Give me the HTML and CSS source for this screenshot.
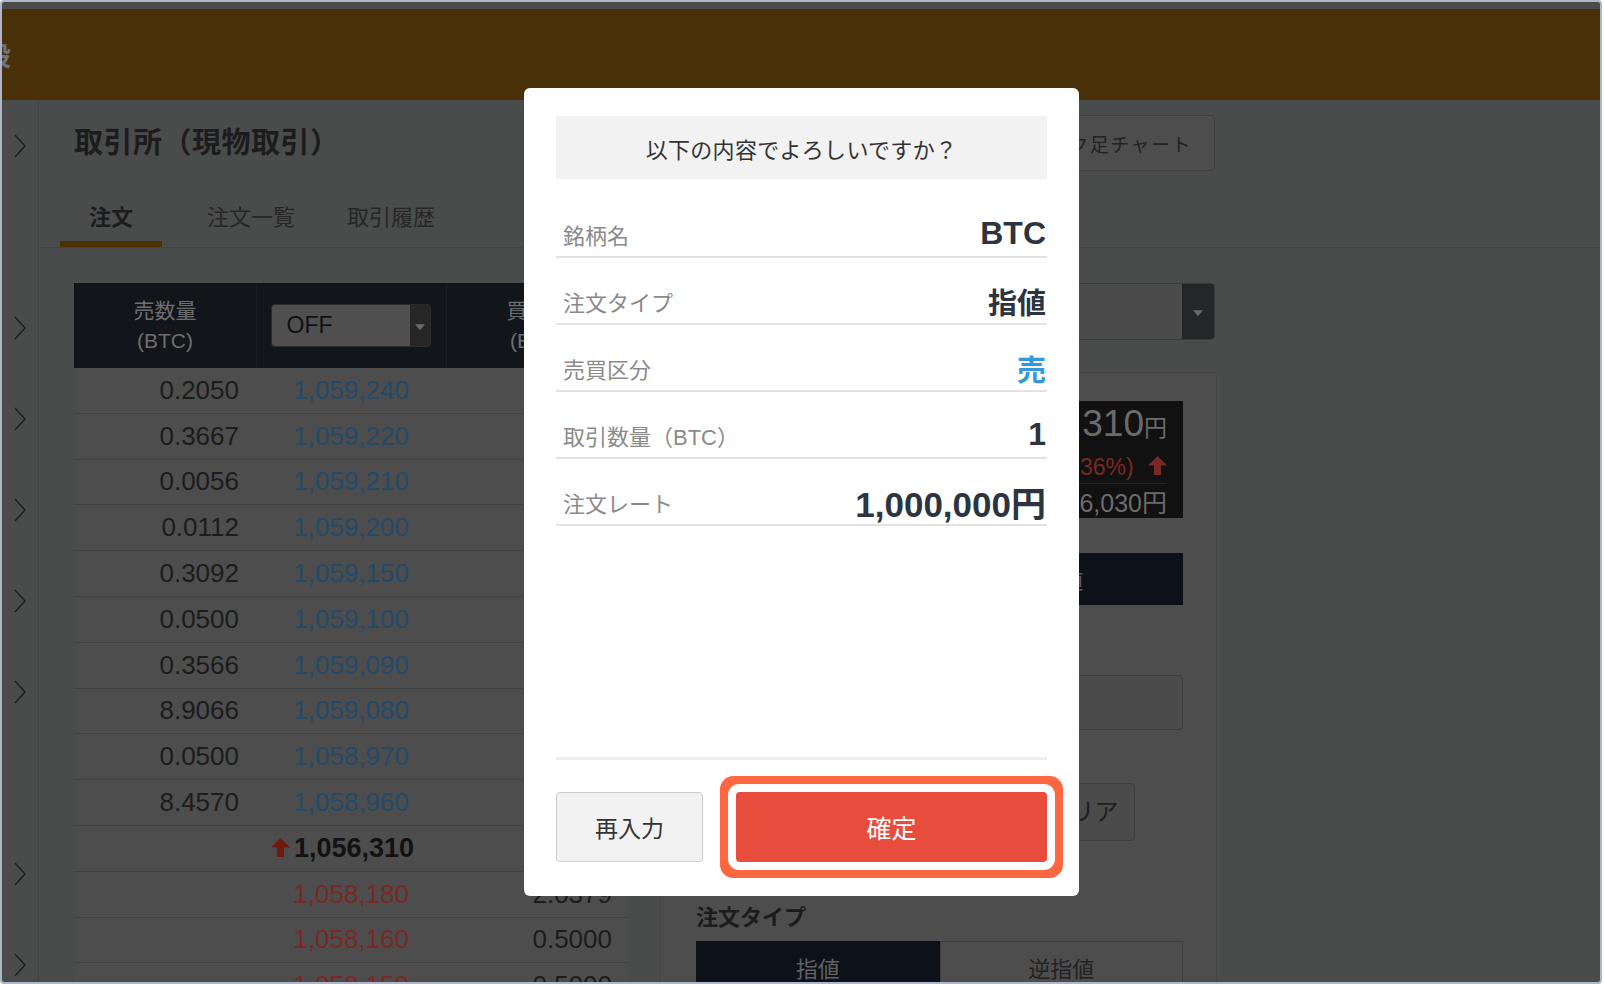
FILE: index.html
```html
<!DOCTYPE html>
<html lang="ja">
<head>
    <meta charset="UTF-8">
    <meta name="viewport" content="width=device-width, initial-scale=1.0">
    <title>取引所（現物取引）</title>
    <link rel="stylesheet" href="styles.css">
</head>
<body>
    <div class="window">
        <div class="top-strip"></div>
        <header class="site-header">
            <span class="header-cut">設</span>
        </header>

        <div class="layout">
            <nav class="sidebar">
                <div class="nav-item"><svg viewBox="0 0 12 24"><path d="M1 1 L11 12 L1 23"/></svg></div>
                <div class="nav-item"></div>
                <div class="nav-item"><svg viewBox="0 0 12 24"><path d="M1 1 L11 12 L1 23"/></svg></div>
                <div class="nav-item"><svg viewBox="0 0 12 24"><path d="M1 1 L11 12 L1 23"/></svg></div>
                <div class="nav-item"><svg viewBox="0 0 12 24"><path d="M1 1 L11 12 L1 23"/></svg></div>
                <div class="nav-item"><svg viewBox="0 0 12 24"><path d="M1 1 L11 12 L1 23"/></svg></div>
                <div class="nav-item"><svg viewBox="0 0 12 24"><path d="M1 1 L11 12 L1 23"/></svg></div>
                <div class="nav-item"></div>
                <div class="nav-item"><svg viewBox="0 0 12 24"><path d="M1 1 L11 12 L1 23"/></svg></div>
                <div class="nav-item"><svg viewBox="0 0 12 24"><path d="M1 1 L11 12 L1 23"/></svg></div>
            </nav>

            <main class="content">
                <div class="page-head">
                    <h1 class="page-title">取引所（現物取引）</h1>
                    <button class="chart-btn">ローソク足チャート</button>
                </div>

                <div class="tabs">
                    <div class="tab active">注文</div>
                    <div class="tab">注文一覧</div>
                    <div class="tab">取引履歴</div>
                </div>

                <div class="workspace">
                    <section class="board">
                        <div class="board-head">
                            <div class="head-col">売数量<br>(BTC)</div>
                            <div class="head-col">
                                <div class="off-select">OFF<span class="select-arrow"></span></div>
                            </div>
                            <div class="head-col">買数量<br>(BTC)</div>
                        </div>

                        <div class="board-row"><span class="qty">0.2050</span><span class="price ask">1,059,240</span><span class="qty"></span></div>
                        <div class="board-row"><span class="qty">0.3667</span><span class="price ask">1,059,220</span><span class="qty"></span></div>
                        <div class="board-row"><span class="qty">0.0056</span><span class="price ask">1,059,210</span><span class="qty"></span></div>
                        <div class="board-row"><span class="qty">0.0112</span><span class="price ask">1,059,200</span><span class="qty"></span></div>
                        <div class="board-row"><span class="qty">0.3092</span><span class="price ask">1,059,150</span><span class="qty"></span></div>
                        <div class="board-row"><span class="qty">0.0500</span><span class="price ask">1,059,100</span><span class="qty"></span></div>
                        <div class="board-row"><span class="qty">0.3566</span><span class="price ask">1,059,090</span><span class="qty"></span></div>
                        <div class="board-row"><span class="qty">8.9066</span><span class="price ask">1,059,080</span><span class="qty"></span></div>
                        <div class="board-row"><span class="qty">0.0500</span><span class="price ask">1,058,970</span><span class="qty"></span></div>
                        <div class="board-row"><span class="qty">8.4570</span><span class="price ask">1,058,960</span><span class="qty"></span></div>
                        <div class="board-row mid">
                            <span class="qty"></span>
                            <span class="price last"><svg class="up" viewBox="0 0 16 16"><path d="M8 0 L16 8 L11 8 L11 16 L5 16 L5 8 L0 8 Z"/></svg>1,056,310</span>
                            <span class="qty"></span>
                        </div>
                        <div class="board-row"><span class="qty"></span><span class="price bid">1,058,180</span><span class="qty">2.0379</span></div>
                        <div class="board-row"><span class="qty"></span><span class="price bid">1,058,160</span><span class="qty">0.5000</span></div>
                        <div class="board-row"><span class="qty"></span><span class="price bid">1,058,150</span><span class="qty">0.5000</span></div>
                    </section>

                    <section class="order">
                        <div class="pair-select"><span>BTC/JPY</span><span class="pair-arrow"></span></div>

                        <div class="order-card">
                            <div class="price-box">
                                <div class="price-now">1,056,310<small>円</small></div>
                                <div class="price-diff">+3,780 (0.36%) <svg class="up" viewBox="0 0 16 16"><path d="M8 0 L16 8 L11 8 L11 16 L5 16 L5 8 L0 8 Z"/></svg></div>
                                <div class="price-high">前日終値 1,046,030円</div>
                            </div>

                            <div class="side-toggle">
                                <div class="side">買</div>
                                <div class="side on">指値</div>
                            </div>

                            <div class="field-label">注文数量</div>
                            <div class="field-input"></div>

                            <div class="field-actions">
                                <button class="ghost-btn">全額</button>
                                <button class="ghost-btn">クリア</button>
                            </div>

                            <div class="section-label">注文タイプ</div>
                            <div class="type-toggle">
                                <div class="type on">指値</div>
                                <div class="type">逆指値</div>
                            </div>
                        </div>
                    </section>
                </div>
            </main>
        </div>

        <div class="modal">
            <div class="confirm-title">以下の内容でよろしいですか？</div>

            <div class="detail-list">
                <div class="detail-row">
                    <span class="detail-label">銘柄名</span>
                    <span class="detail-value">BTC</span>
                </div>
                <div class="detail-row">
                    <span class="detail-label">注文タイプ</span>
                    <span class="detail-value cjk">指値</span>
                </div>
                <div class="detail-row">
                    <span class="detail-label">売買区分</span>
                    <span class="detail-value cjk sell">売</span>
                </div>
                <div class="detail-row">
                    <span class="detail-label">取引数量（BTC）</span>
                    <span class="detail-value">1</span>
                </div>
                <div class="detail-row">
                    <span class="detail-label">注文レート</span>
                    <span class="detail-value rate">1,000,000円</span>
                </div>
            </div>

            <div class="modal-actions">
                <button class="btn-retry">再入力</button>
                <button class="btn-confirm">確定</button>
            </div>
        </div>
    </div>
</body>
</html>
```

FILE: styles.css
```css
* {
    box-sizing: border-box;
}

body {
    margin: 0;
    background-color: #fff;
    font-family: "Liberation Sans", "Noto Sans CJK JP", sans-serif;
}

button {
    font-family: inherit;
}

.window {
    position: relative;
    width: 1602px;
    height: 984px;
    border: 2px solid #aeb7c7;
    border-radius: 4px;
    background-color: #4a4b4b;
    overflow: hidden;
}

.top-strip {
    height: 7px;
}

.site-header {
    height: 91px;
    background-color: #4a3009;
    display: flex;
    align-items: center;
}

.header-cut {
    margin-left: -17px;
    font-size: 26px;
    font-weight: 700;
    color: #6b7486;
}

/* 左のメニュー */
.layout {
    display: flex;
    height: 882px;
}

.sidebar {
    width: 37px;
    flex-shrink: 0;
    border-right: 1px solid #414242;
}

.nav-item {
    height: 91px;
    display: flex;
    align-items: center;
    justify-content: center;
}

.nav-item svg {
    width: 12px;
    height: 24px;
    fill: none;
    stroke: #1d1d1d;
    stroke-width: 1.4;
}

.content {
    flex: 1;
    min-width: 0;
}

.page-head {
    display: flex;
    align-items: center;
    justify-content: space-between;
    height: 56px;
    margin-top: 15px;
    padding: 0 385px 0 35px;
}

.page-title {
    margin: 0;
    font-size: 29px;
    line-height: 40px;
    font-weight: 700;
    letter-spacing: 0.5px;
    color: #1c1c1c;
}

.chart-btn {
    height: 56px;
    padding: 0 22px;
    border: 1px solid #3e3e3e;
    border-radius: 4px;
    background-color: #4d4d4d;
    color: #222;
    font-size: 19px;
    letter-spacing: 1.5px;
}

.tabs {
    display: flex;
    height: 62px;
    margin-top: 15px;
    padding-left: 2px;
    border-bottom: 1px solid #424343;
}

.tab {
    position: relative;
    width: 140px;
    display: flex;
    align-items: center;
    justify-content: center;
    padding-bottom: 4px;
    font-size: 22px;
    color: #262626;
}

.tab.active {
    font-weight: 700;
    color: #1c1c1c;
}

.tab.active::after {
    content: "";
    position: absolute;
    left: 19px;
    right: 19px;
    bottom: 0;
    height: 6px;
    background-color: #4c3200;
}

.workspace {
    display: flex;
    gap: 31px;
    padding: 35px 0 0 35px;
}

/* 板 */
.board {
    width: 555px;
    flex-shrink: 0;
}

.board-head {
    display: grid;
    grid-template-columns: 183px 190px 182px;
    height: 85px;
    background-color: #12161b;
}

.head-col {
    display: flex;
    align-items: center;
    justify-content: center;
    text-align: center;
    font-size: 21px;
    line-height: 30px;
    color: #6e6e6e;
    border-right: 1px solid #1b1f25;
}

.head-col:last-child {
    border-right: none;
}

.off-select {
    position: relative;
    width: 160px;
    height: 43px;
    margin-left: -2px;
    padding-left: 15px;
    border: 1px solid #2c2c2c;
    border-radius: 4px;
    background-color: #4f4f4f;
    color: #111;
    font-size: 23px;
    line-height: 41px;
    text-align: left;
}

.select-arrow {
    position: absolute;
    top: 0;
    right: 0;
    bottom: 0;
    width: 20px;
    background-color: #262626;
    border-radius: 0 3px 3px 0;
}

.select-arrow::after,
.pair-arrow::after {
    content: "";
    position: absolute;
    top: 50%;
    left: 50%;
    transform: translate(-50%, -30%);
    border-left: 5px solid transparent;
    border-right: 5px solid transparent;
    border-top: 6px solid #6a6a6a;
}

.board-row {
    display: grid;
    grid-template-columns: 183px 190px 182px;
    height: 45.8px;
    background-color: #4d4d4d;
    border-bottom: 1px solid #414141;
    font-size: 26px;
    align-items: center;
}

.qty {
    text-align: right;
    padding-right: 18px;
    color: #1c1c1c;
}

.qty:last-child {
    padding-right: 17px;
}

.price {
    text-align: right;
    padding-right: 38px;
}

.price.ask {
    color: #234a6a;
}

.price.bid {
    color: #7a2823;
}

.price.last {
    padding-right: 33px;
    font-size: 27px;
    font-weight: 700;
    color: #121212;
}

.up {
    width: 19px;
    height: 19px;
    margin-right: 4px;
    fill: #6e1a13;
}

/* 注文フォーム */
.order {
    width: 557px;
    flex-shrink: 0;
}

.pair-select {
    position: relative;
    width: 555px;
    height: 57px;
    padding-left: 20px;
    border: 1px solid #3a3a3a;
    border-radius: 4px;
    background-color: #4b4b4b;
    font-size: 22px;
    line-height: 55px;
    color: #1c1c1c;
}

.pair-arrow {
    position: absolute;
    top: 0;
    right: 0;
    bottom: 0;
    width: 32px;
    background-color: #242628;
    border-radius: 0 3px 3px 0;
}

.order-card {
    height: 700px;
    margin-top: 32px;
    padding: 28px 33px 0 35px;
    border: 1px solid #454545;
    border-radius: 4px;
    background-color: #4d4d4d;
}

.price-box {
    height: 117px;
    padding: 0 16px 0 0;
    background-color: #111;
    text-align: right;
    color: #6b6b6b;
}

.price-now {
    font-size: 37px;
    line-height: 45px;
}

.price-now small {
    font-size: 23px;
}

.price-diff {
    font-size: 23px;
    line-height: 32px;
    color: #7a2823;
    border-bottom: 1px solid #262626;
}

.price-diff .up {
    fill: #7a2823;
    width: 19px;
    height: 19px;
    margin: 0 0 0 8px;
}

.price-high {
    font-size: 25px;
    line-height: 38px;
}

.side-toggle,
.type-toggle {
    display: flex;
}

.side-toggle {
    height: 52px;
    margin-top: 35px;
}

.side,
.type {
    flex: 1;
    display: flex;
    align-items: center;
    justify-content: center;
    font-size: 22px;
    color: #222;
    border: 1px solid #3e3e3e;
}

.side.on,
.type.on {
    background-color: #0d111a;
    border-color: #0d111a;
    color: #626262;
}

.field-label {
    margin-top: 20px;
    font-size: 20px;
    line-height: 30px;
    color: #1c1c1c;
}

.field-input {
    height: 55px;
    margin-top: 20px;
    border: 1px solid #3e3e3e;
    border-radius: 4px;
    background-color: #4b4b4b;
}

.field-actions {
    display: flex;
    justify-content: flex-end;
    gap: 12px;
    margin-top: 53px;
    padding-right: 48px;
}

.ghost-btn {
    width: 105px;
    height: 58px;
    padding-bottom: 6px;
    border: 1px solid #3e3e3e;
    border-radius: 4px;
    background-color: #4b4b4b;
    color: #1f1f1f;
    font-size: 24px;
}

.section-label {
    margin-top: 62px;
    font-size: 22px;
    line-height: 30px;
    font-weight: 700;
    color: #1c1c1c;
}

.type-toggle {
    height: 52px;
    margin-top: 8px;
}

/* 確認ダイアログ */
.modal {
    position: fixed;
    left: 524px;
    top: 88px;
    width: 555px;
    height: 808px;
    display: flex;
    flex-direction: column;
    padding: 28px 32px 34px;
    border-radius: 6px;
    background-color: #fff;
}

.confirm-title {
    height: 63px;
    display: flex;
    align-items: center;
    justify-content: center;
    background-color: #f2f2f2;
    font-size: 22px;
    letter-spacing: 0.3px;
    color: #333;
}

.detail-list {
    flex: 1;
    margin-top: 12px;
}

.detail-row {
    display: flex;
    align-items: center;
    justify-content: space-between;
    height: 67px;
    padding: 20px 1px 0 7px;
    border-bottom: 2px solid #e2e2e2;
}

.detail-label {
    font-size: 22px;
    color: #8a8a8a;
}

.detail-value {
    font-size: 32px;
    font-weight: 700;
    color: #2b3440;
}

.detail-value.cjk {
    font-size: 29px;
}

.detail-value.rate {
    font-size: 35px;
}

.detail-value.sell {
    color: #3498db;
}

.modal-actions {
    display: flex;
    gap: 33px;
    padding-top: 32px;
    border-top: 3px solid #eeeeee;
}

.btn-retry {
    width: 147px;
    height: 70px;
    border: 1px solid #cccccc;
    border-radius: 4px;
    background-color: #f2f2f2;
    color: #333;
    font-size: 23px;
}

.btn-confirm {
    flex: 1;
    height: 70px;
    border: none;
    border-radius: 4px;
    background-color: #e74c3c;
    color: #fff;
    font-size: 25px;
    box-shadow: 0 0 0 8px #fff, 0 0 0 16px #ff6742;
}
```
